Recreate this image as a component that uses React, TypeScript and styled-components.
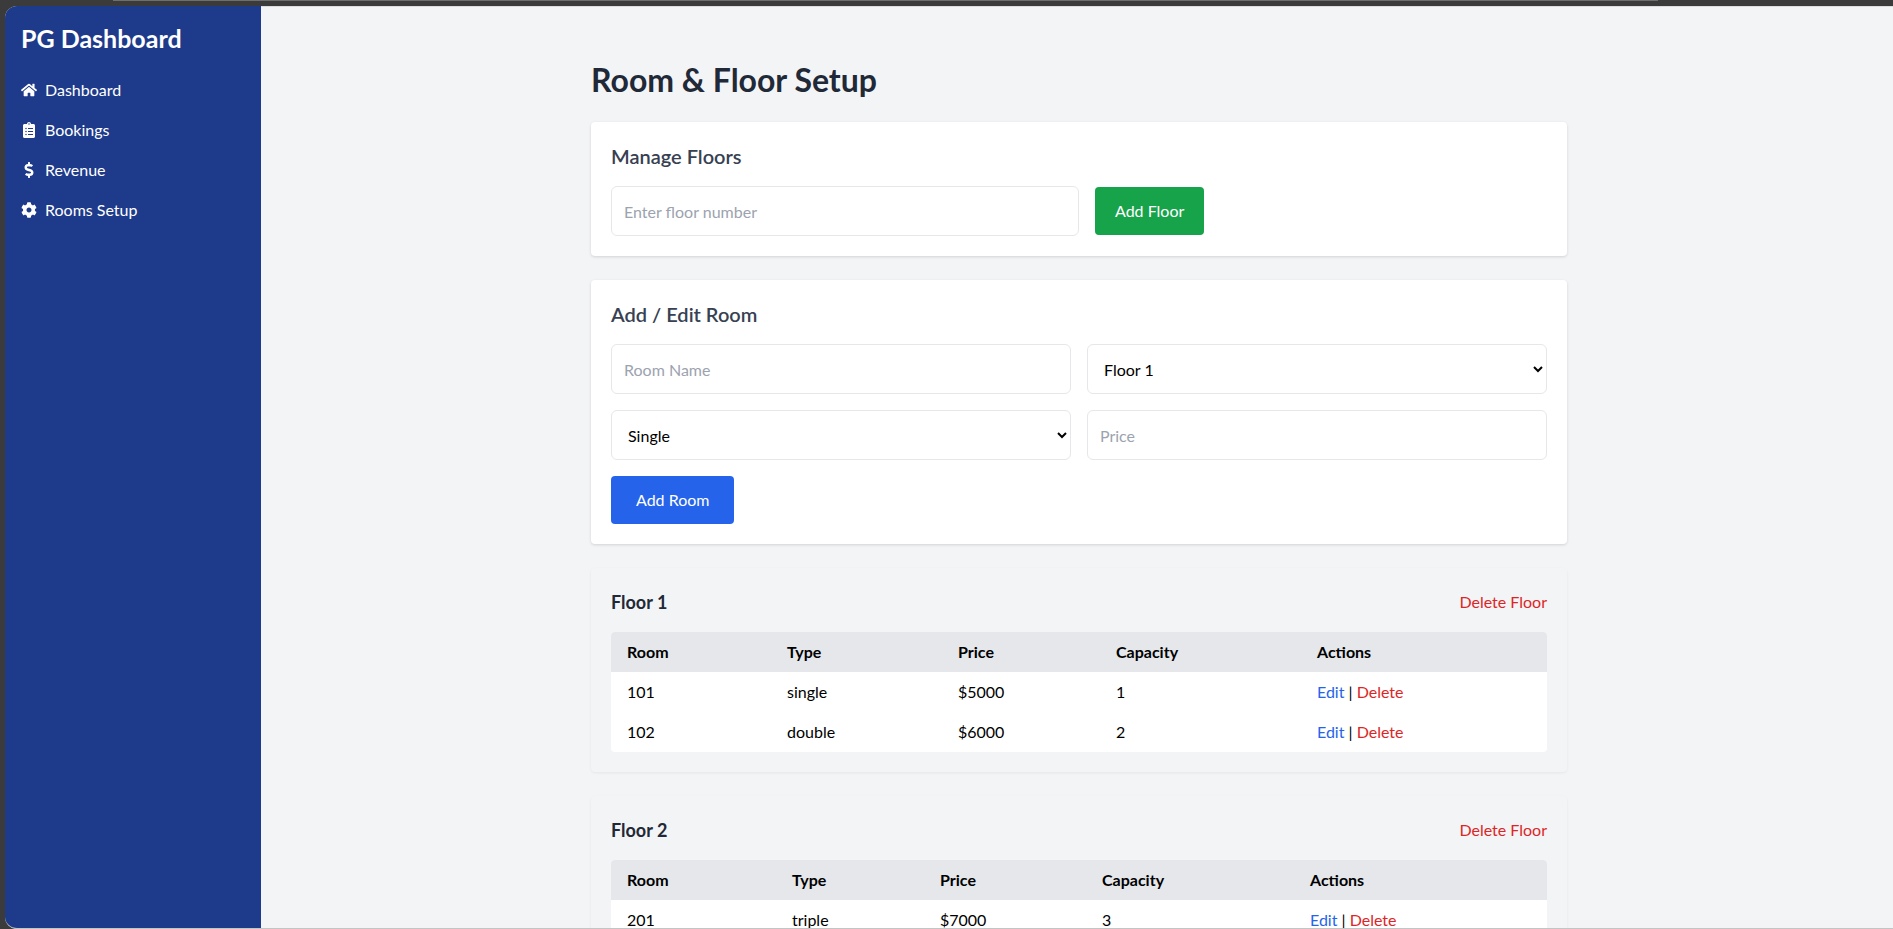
import React from "react";
import styled, { createGlobalStyle } from "styled-components";
import { FaHome, FaClipboardList, FaDollarSign, FaCog } from "react-icons/fa";

const GlobalStyle = createGlobalStyle`
  html, body {
    margin: 0;
    height: 100%;
    overflow: hidden;
    background: #3b3b3b;
  }
  * {
    box-sizing: border-box;
  }
  body {
    font-family: "Lato", "Open Sans", "Liberation Sans", sans-serif;
    font-size: 16px;
    line-height: 24px;
    color: #000;
  }
`;

const Frame = styled.div`
  height: 929px;
  padding-left: 5px;
`;

const TopEdge = styled.div`
  height: 1px;
  margin: 0 235px 5px 108px;
  background: #6e6e6e;
`;

const Shell = styled.div`
  display: flex;
  height: 923px;
  overflow: hidden;
  border-radius: 12px 0 0 12px;
  background: #f3f4f6;
  border-bottom: 1px solid #c4c4c4;
`;

const Sidebar = styled.aside`
  flex: 0 0 256px;
  padding: 16px;
  background: #1e3a8a;
  color: #fff;
`;

const Brand = styled.h1`
  margin: 0 0 16px;
  font-size: 25px;
  line-height: 32px;
  font-weight: 700;
`;

const NavLink = styled.a`
  display: flex;
  align-items: center;
  gap: 8px;
  padding: 8px 0;
  color: #fff;
`;

const NavIcon = styled.span`
  display: flex;
  justify-content: center;
  width: 16px;
  font-size: 16px;
`;

const Main = styled.main`
  flex: 1;
  padding: 55px 0 0 4px;
  border-top: 1px solid #dcdcdc;
  overflow: hidden;
`;

const Content = styled.div`
  width: 976px;
  margin: 0 auto;
`;

const PageTitle = styled.h2`
  margin: 0 0 24px;
  font-size: 32px;
  line-height: 36px;
  font-weight: 700;
  color: #1f2937;
`;

const Card = styled.section`
  margin-bottom: 24px;
  padding: 20px;
  border-radius: 4px;
  background: ${({ $muted }: { $muted?: boolean }) =>
    $muted ? "#f3f4f6" : "#fff"};
  box-shadow: 0 1px 3px rgba(0, 0, 0, ${({ $muted }: { $muted?: boolean }) =>
    $muted ? 0.06 : 0.14});
`;

const CardTitle = styled.h3`
  margin: 0 0 16px;
  font-size: 20px;
  line-height: 28px;
  font-weight: 600;
  color: #374151;
`;

const FloorRow = styled.div`
  display: flex;
  align-items: center;
  gap: 16px;
`;

const TextInput = styled.input`
  width: 100%;
  height: 50px;
  padding: 12px;
  border: 1px solid #e5e7eb;
  border-radius: 6px;
  background: #fff;
  font: inherit;
  &::placeholder {
    color: #9ca3af;
  }
`;

const FloorInput = styled(TextInput)`
  width: 468px;
`;

const Select = styled.select`
  width: 100%;
  height: 50px;
  padding: 12px;
  border: 1px solid #e5e7eb;
  border-radius: 6px;
  background: #fff;
  color: #000;
  font: inherit;
`;

const FormGrid = styled.div`
  display: grid;
  grid-template-columns: 1fr 1fr;
  gap: 16px;
  margin-bottom: 16px;
`;

const Button = styled.button`
  height: 48px;
  padding: 0 ${({ $wide }: { $wide?: boolean; $color: string }) =>
    $wide ? "25px" : "20px"};
  border: 0;
  border-radius: 4px;
  background: ${({ $color }: { $color: string }) => $color};
  color: #fff;
  font: inherit;
`;

const FloorHeader = styled.div`
  display: flex;
  justify-content: space-between;
  align-items: center;
  margin-bottom: 16px;
`;

const FloorTitle = styled.h4`
  margin: 0;
  font-size: 18px;
  line-height: 28px;
  font-weight: 700;
  color: #1f2937;
`;

const DeleteText = styled.span`
  color: #dc2626;
`;

const EditText = styled.span`
  color: #2563eb;
`;

const RoomTable = styled.table`
  width: 100%;
  table-layout: fixed;
  border-collapse: separate;
  border-spacing: 0;
  overflow: hidden;
  border-radius: 4px;
  background: #fff;
`;

const HeadCell = styled.th`
  padding: 8px 16px;
  background: #e5e7eb;
  font-weight: 700;
  text-align: left;
`;

const Cell = styled.td`
  padding: 8px 16px;
`;

const floors = [
  {
    name: "Floor 1",
    widths: [160, 171, 158, 201, 246],
    rooms: [
      { room: "101", type: "single", price: "$5000", capacity: 1 },
      { room: "102", type: "double", price: "$6000", capacity: 2 },
    ],
  },
  {
    name: "Floor 2",
    widths: [165, 148, 162, 208, 253],
    rooms: [{ room: "201", type: "triple", price: "$7000", capacity: 3 }],
  },
];

const navItems = [
  { label: "Dashboard", icon: <FaHome /> },
  { label: "Bookings", icon: <FaClipboardList /> },
  { label: "Revenue", icon: <FaDollarSign /> },
  { label: "Rooms Setup", icon: <FaCog /> },
];

const App = () => {
  return (
    <Frame>
      <GlobalStyle />
      <TopEdge />
      <Shell>
        <Sidebar>
          <Brand>PG Dashboard</Brand>
          <nav>
            {navItems.map(item => (
              <NavLink key={item.label}>
                <NavIcon>{item.icon}</NavIcon>
                {item.label}
              </NavLink>
            ))}
          </nav>
        </Sidebar>
        <Main>
          <Content>
            <PageTitle>Room &amp; Floor Setup</PageTitle>
            <Card>
              <CardTitle>Manage Floors</CardTitle>
              <FloorRow>
                <FloorInput placeholder="Enter floor number" />
                <Button $color="#16a34a">Add Floor</Button>
              </FloorRow>
            </Card>
            <Card>
              <CardTitle>Add / Edit Room</CardTitle>
              <FormGrid>
                <TextInput placeholder="Room Name" />
                <Select defaultValue="Floor 1">
                  <option>Floor 1</option>
                  <option>Floor 2</option>
                </Select>
                <Select defaultValue="Single">
                  <option>Single</option>
                  <option>Double</option>
                  <option>Triple</option>
                </Select>
                <TextInput placeholder="Price" />
              </FormGrid>
              <Button $color="#2563eb" $wide>
                Add Room
              </Button>
            </Card>
            {floors.map(floor => (
              <Card $muted key={floor.name}>
                <FloorHeader>
                  <FloorTitle>{floor.name}</FloorTitle>
                  <DeleteText>Delete Floor</DeleteText>
                </FloorHeader>
                <RoomTable>
                  <colgroup>
                    {floor.widths.map((width, index) => (
                      <col key={index} width={width} />
                    ))}
                  </colgroup>
                  <thead>
                    <tr>
                      <HeadCell>Room</HeadCell>
                      <HeadCell>Type</HeadCell>
                      <HeadCell>Price</HeadCell>
                      <HeadCell>Capacity</HeadCell>
                      <HeadCell>Actions</HeadCell>
                    </tr>
                  </thead>
                  <tbody>
                    {floor.rooms.map(room => (
                      <tr key={room.room}>
                        <Cell>{room.room}</Cell>
                        <Cell>{room.type}</Cell>
                        <Cell>{room.price}</Cell>
                        <Cell>{room.capacity}</Cell>
                        <Cell>
                          <EditText>Edit</EditText> |{" "}
                          <DeleteText>Delete</DeleteText>
                        </Cell>
                      </tr>
                    ))}
                  </tbody>
                </RoomTable>
              </Card>
            ))}
          </Content>
        </Main>
      </Shell>
    </Frame>
  );
};

export default App;
